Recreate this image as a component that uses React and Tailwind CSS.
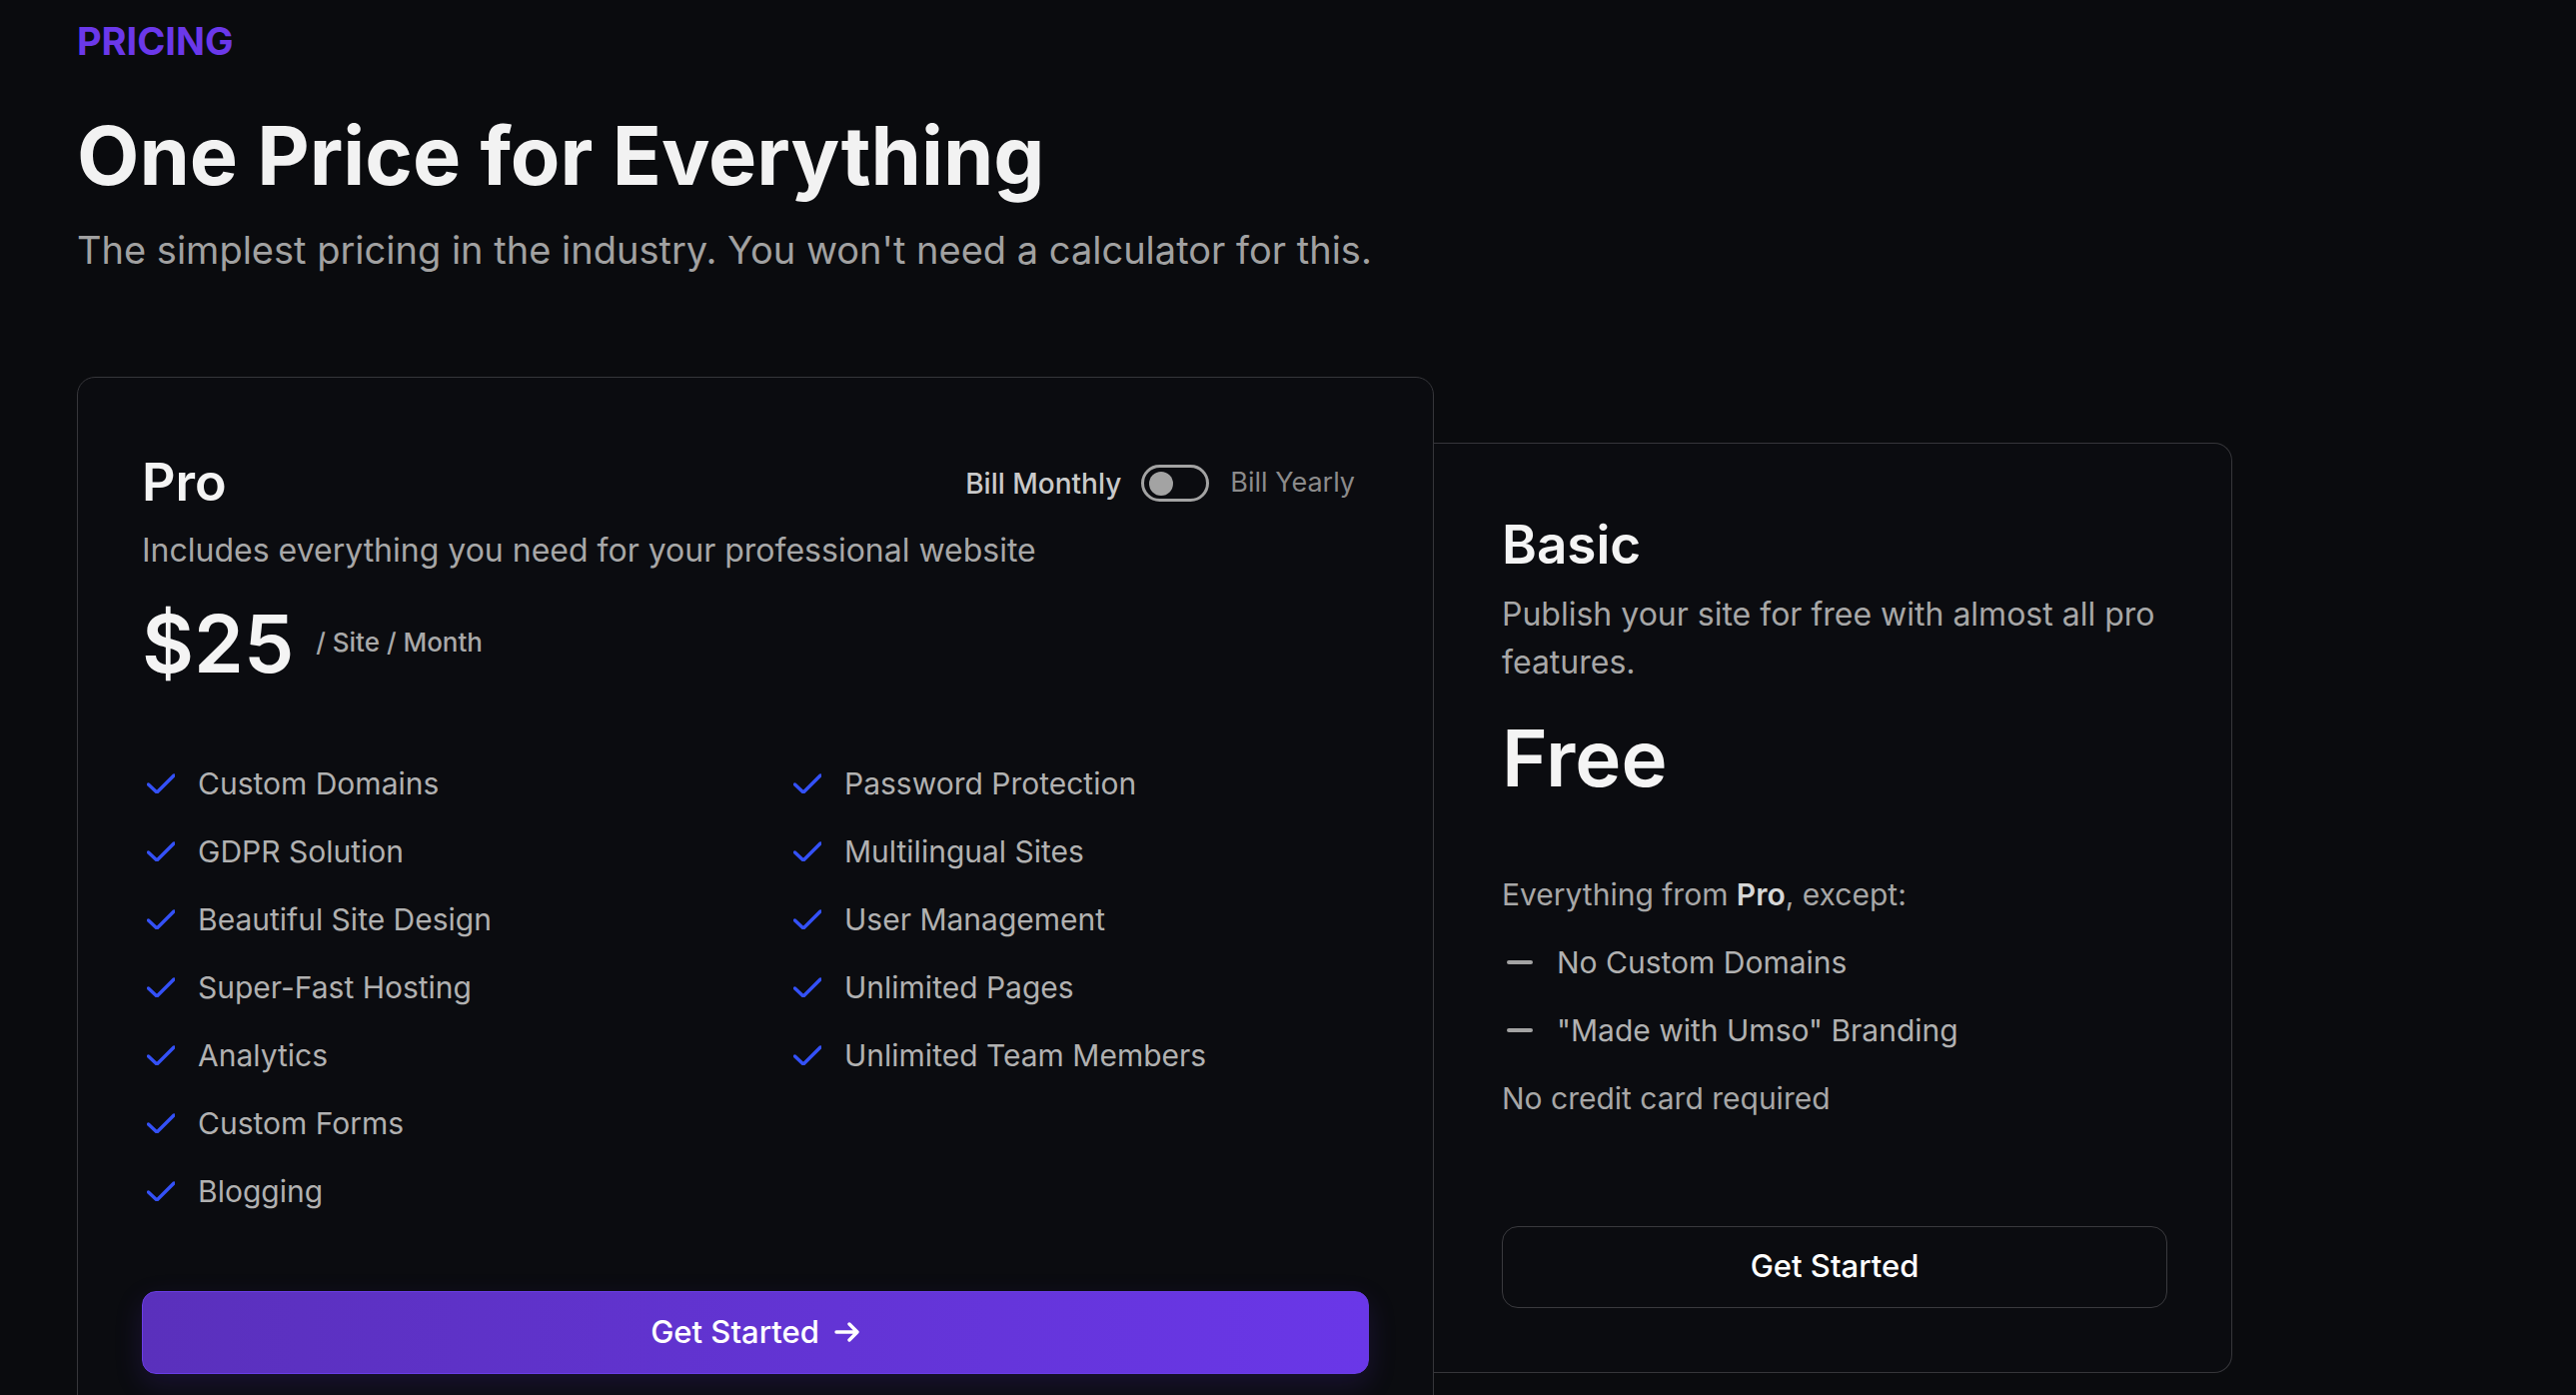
import React from 'react';

const proFeaturesLeft = [
  'Custom Domains',
  'GDPR Solution',
  'Beautiful Site Design',
  'Super-Fast Hosting',
  'Analytics',
  'Custom Forms',
  'Blogging',
];

const proFeaturesRight = [
  'Password Protection',
  'Multilingual Sites',
  'User Management',
  'Unlimited Pages',
  'Unlimited Team Members',
];

const CheckIcon = () => (
  <svg width="28" height="20" viewBox="0 0 28 20" fill="none" className="ml-[5px] shrink-0">
    <polyline points="1.5,11 10,19 27,2" stroke="#3451f7" strokeWidth="3.4" strokeLinecap="round" strokeLinejoin="round" />
  </svg>
);

const ArrowIcon = () => (
  <svg width="26" height="20" viewBox="0 0 26 20" fill="none" className="ml-[15px]">
    <path d="M2 10h21M15 2l8 8-8 8" stroke="white" strokeWidth="3.4" strokeLinecap="round" strokeLinejoin="round" />
  </svg>
);

const FeatureItem = ({ label }) => (
  <li className="flex items-center h-[48px]">
    <CheckIcon />
    <span className="ml-[23px] text-[30px] leading-[48px] text-[#b1b1b1]">{label}</span>
  </li>
);

const ProCard = () => {
  return (
    <div className="w-[1358px] shrink-0 rounded-[18px] border-[1.5px] border-[#36363a] bg-[#0b0c10] px-[64px] pt-[74px] pb-[64px]">
      <div className="flex items-center justify-between">
        <h3 className="text-[52px] leading-[1.2] font-semibold text-[#f4f4f4]">Pro</h3>
        <div className="flex items-center pr-[14px]">
          <span className="text-[28px] font-medium text-[#c9c9c9]">Bill Monthly</span>
          <div className="ml-[20px] flex h-[37px] w-[68px] items-center rounded-full border-[3px] border-[#a3a3a3] px-[5px]">
            <div className="h-[24px] w-[24px] rounded-full bg-[#a3a3a3]" />
          </div>
          <span className="ml-[21px] text-[27px] text-[#8b8b8b]">Bill Yearly</span>
        </div>
      </div>
      <p className="mt-[12px] text-[32px] leading-[48px] text-[#a7a7a7]">
        Includes everything you need for your professional website
      </p>
      <div className="mt-[21px] flex items-start">
        <span className="text-[80px] leading-[1.2] font-semibold text-[#f4f4f4]">$25</span>
        <span className="ml-[22px] mt-[31px] text-[26px] leading-[1.2] font-medium text-[#a9a9a9]">/ Site / Month</span>
      </div>
      <div className="mt-[68px] grid grid-cols-2 gap-x-[66px]">
        <ul className="flex flex-col gap-[20px]">
          {proFeaturesLeft.map((f) => (
            <FeatureItem key={f} label={f} />
          ))}
        </ul>
        <ul className="flex flex-col gap-[20px]">
          {proFeaturesRight.map((f) => (
            <FeatureItem key={f} label={f} />
          ))}
        </ul>
      </div>
      <button className="mt-[76px] flex h-[83px] w-full items-center justify-center rounded-[14px] border border-[#6a3ee6] bg-linear-to-r from-[#5a30bc] to-[#6a37e8] text-[31px] font-medium text-white shadow-[0_10px_28px_rgba(95,50,210,0.18)]">
        Get Started
        <ArrowIcon />
      </button>
    </div>
  );
};

const BasicCard = () => {
  return (
    <div className="w-[799px] shrink-0 rounded-r-[18px] border-[1.5px] border-l-0 border-[#36363a] bg-[#0b0c10] pl-[68px] pr-[64px] pt-[70px] pb-[64px]">
      <h3 className="text-[53px] leading-[1.2] font-semibold text-[#f4f4f4]">Basic</h3>
      <p className="mt-[13px] text-[32px] leading-[48px] text-[#a7a7a7]">
        Publish your site for free with almost all pro features.
      </p>
      <div className="mt-[25px] text-[78px] leading-[1.2] font-semibold text-[#f4f4f4]">Free</div>
      <div className="mt-[65px] flex flex-col gap-[20px] text-[30px] leading-[48px] text-[#a7a7a7]">
        <p>
          Everything from <span className="font-semibold text-[#d6d6d6]">Pro</span>, except:
        </p>
        {['No Custom Domains', '"Made with Umso" Branding'].map((item) => (
          <div key={item} className="flex items-center">
            <span className="ml-[5px] h-[4px] w-[26px] rounded-sm bg-[#a3a3a3]" />
            <span className="ml-[24px] text-[#b1b1b1]">{item}</span>
          </div>
        ))}
        <p>No credit card required</p>
      </div>
      <button className="mt-[104px] flex h-[82px] w-full items-center justify-center rounded-[16px] border-[1.5px] border-[#3a3a3e] text-[31px] font-medium text-white">
        Get Started
      </button>
    </div>
  );
};

export default function App() {
  return (
    <div className="min-h-screen bg-[#0a0b0e] pl-[77px] pt-[19px] pb-[80px] font-['Inter','Liberation_Sans',sans-serif]">
      <p className="text-[38px] leading-[1.2] font-bold text-[#6b38ea]">PRICING</p>
      <h1 className="mt-[43px] text-[81px] leading-[1.2] font-bold text-[#f2f2f2]">One Price for Everything</h1>
      <p className="mt-[23px] text-[38px] leading-[1.2] text-[#a1a1a1]">
        The simplest pricing in the industry. You won't need a calculator for this.
      </p>
      <div className="mt-[104px] flex items-center">
        <ProCard />
        <BasicCard />
      </div>
    </div>
  );
}
